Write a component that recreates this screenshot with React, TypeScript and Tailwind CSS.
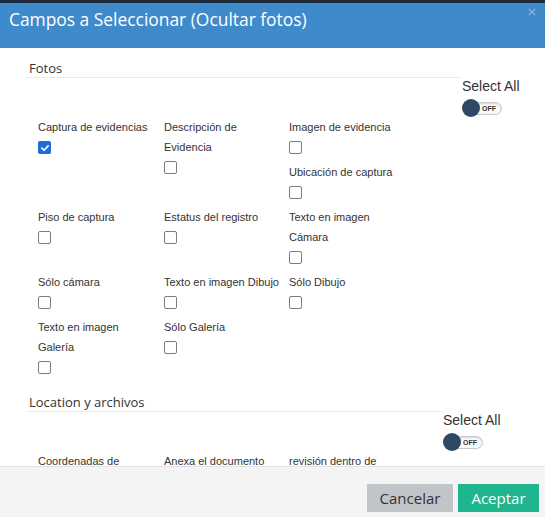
import React from "react";

type Field = { lines: string[]; checked?: boolean };

const heading = { fontFamily: '"Open Sans", "Liberation Sans", sans-serif' };
const arial = { fontFamily: '"Liberation Sans", Arial, sans-serif' };

function Box({ checked }: { checked?: boolean }) {
  if (checked) {
    return (
      <span className="grid h-[13px] w-[13px] place-items-center rounded-[2px] bg-[#1a6ed8]">
        <svg viewBox="0 0 12 12" className="h-[10px] w-[10px]" fill="none">
          <path d="M2.2 6.2 4.8 8.7 9.8 3.4" stroke="white" strokeWidth="2" strokeLinecap="round" strokeLinejoin="round" />
        </svg>
      </span>
    );
  }
  return <span className="block h-[13px] w-[13px] rounded-[2px] border-[1.5px] border-[#7d7d7d] bg-white" />;
}

function Item({ field }: { field: Field }) {
  return (
    <div className="pb-[8px]">
      {field.lines.map((l) => (
        <div key={l} className="h-[20px] text-[11px] leading-[20px] whitespace-nowrap text-[#333]">
          {l}
        </div>
      ))}
      <div className="mt-[4px]">
        <Box checked={field.checked} />
      </div>
    </div>
  );
}

function Toggle() {
  return (
    <div className="relative mt-[5px] h-[18px] w-[40px]">
      <div className="absolute left-[3px] top-[2.5px] flex h-[13px] w-[37px] items-center justify-end rounded-full border border-[#c8c8c8] bg-[#fafafa] pr-[5px] shadow-[inset_0_1px_2px_rgba(0,0,0,0.15)]">
        <span className="text-[7px] font-bold leading-none text-[#333]" style={arial}>OFF</span>
      </div>
      <div className="absolute left-0 top-0 h-[18px] w-[18px] rounded-full bg-[#2f4866]" />
    </div>
  );
}

function Section({
  title,
  lineWidth,
  offset,
  rows,
}: {
  title: string;
  lineWidth: string;
  offset: string;
  rows: Field[][][];
}) {
  return (
    <section>
      <h3
        className={`mt-[11px] h-[19px] border-b border-[#ebebeb] pl-[3px] text-[13px] leading-[18px] text-[#333] ${lineWidth}`}
        style={heading}
      >
        {title}
      </h3>
      <div className={`flex flex-col ${offset}`}>
        <span className="text-[14px] leading-[16px] text-[#333]" style={arial}>
          Select All
        </span>
        <Toggle />
      </div>
      <div className="pl-[12px]" style={arial}>
        {rows.map((row, i) => (
          <div key={i} className="flex items-start">
            {row.map((cell, j) => (
              <div key={j} className={`shrink-0 ${j === 2 ? "w-[125px]" : j === 1 ? "w-[125px]" : "w-[126px]"}`}>
                {cell.map((f) => (
                  <Item key={f.lines.join(" ")} field={f} />
                ))}
              </div>
            ))}
          </div>
        ))}
      </div>
    </section>
  );
}

const fotos: Field[][][] = [
  [
    [{ lines: ["Captura de evidencias"], checked: true }],
    [{ lines: ["Descripción de", "Evidencia"] }],
    [{ lines: ["Imagen de evidencia"] }, { lines: ["Ubicación de captura"] }],
  ],
  [
    [{ lines: ["Piso de captura"] }],
    [{ lines: ["Estatus del registro"] }],
    [{ lines: ["Texto en imagen", "Cámara"] }],
  ],
  [
    [{ lines: ["Sólo cámara"] }],
    [{ lines: ["Texto en imagen Dibujo"] }],
    [{ lines: ["Sólo Dibujo"] }],
  ],
  [
    [{ lines: ["Texto en imagen", "Galería"] }],
    [{ lines: ["Sólo Galería"] }],
  ],
];

const location: Field[][][] = [
  [
    [{ lines: ["Coordenadas de"] }],
    [{ lines: ["Anexa el documento"] }],
    [{ lines: ["revisión dentro de"] }],
  ],
];

export default function App() {
  return (
    <div className="flex h-[517px] w-[545px] flex-col overflow-hidden bg-[#1e2c3b] pt-[3px]">
      <header className="relative h-[45px] shrink-0 bg-[#3f8acb] pl-[9px] pt-[4px]">
        <h2 className="text-[17.4px] leading-[24px] text-white" style={heading}>
          Campos a Seleccionar (Ocultar fotos)
        </h2>
        <svg viewBox="0 0 10 10" className="absolute right-[9px] top-[5px] h-[8px] w-[8px]">
          <path d="M1 1 9 9M9 1 1 9" stroke="#8fb7df" strokeWidth="1.4" />
        </svg>
      </header>
      <main className="h-[418px] shrink-0 overflow-hidden bg-white pl-[26px]">
        <Section title="Fotos" lineWidth="w-[436px]" offset="pl-[436px]" rows={fotos} />
        <Section title="Location y archivos" lineWidth="w-[417px]" offset="pl-[417px]" rows={location} />
      </main>
      <footer
        className="flex flex-1 items-start justify-end gap-[5px] border-t border-[#e3e3e3] bg-[#f4f4f4] pr-[6px] pt-[17px]"
        style={heading}
      >
        <button className="h-[28px] w-[86px] bg-[#c1c5c9] text-[15px] text-[#333]">Cancelar</button>
        <button className="h-[28px] w-[81px] bg-[#1eb58f] text-[15px] text-white">Aceptar</button>
      </footer>
    </div>
  );
}
